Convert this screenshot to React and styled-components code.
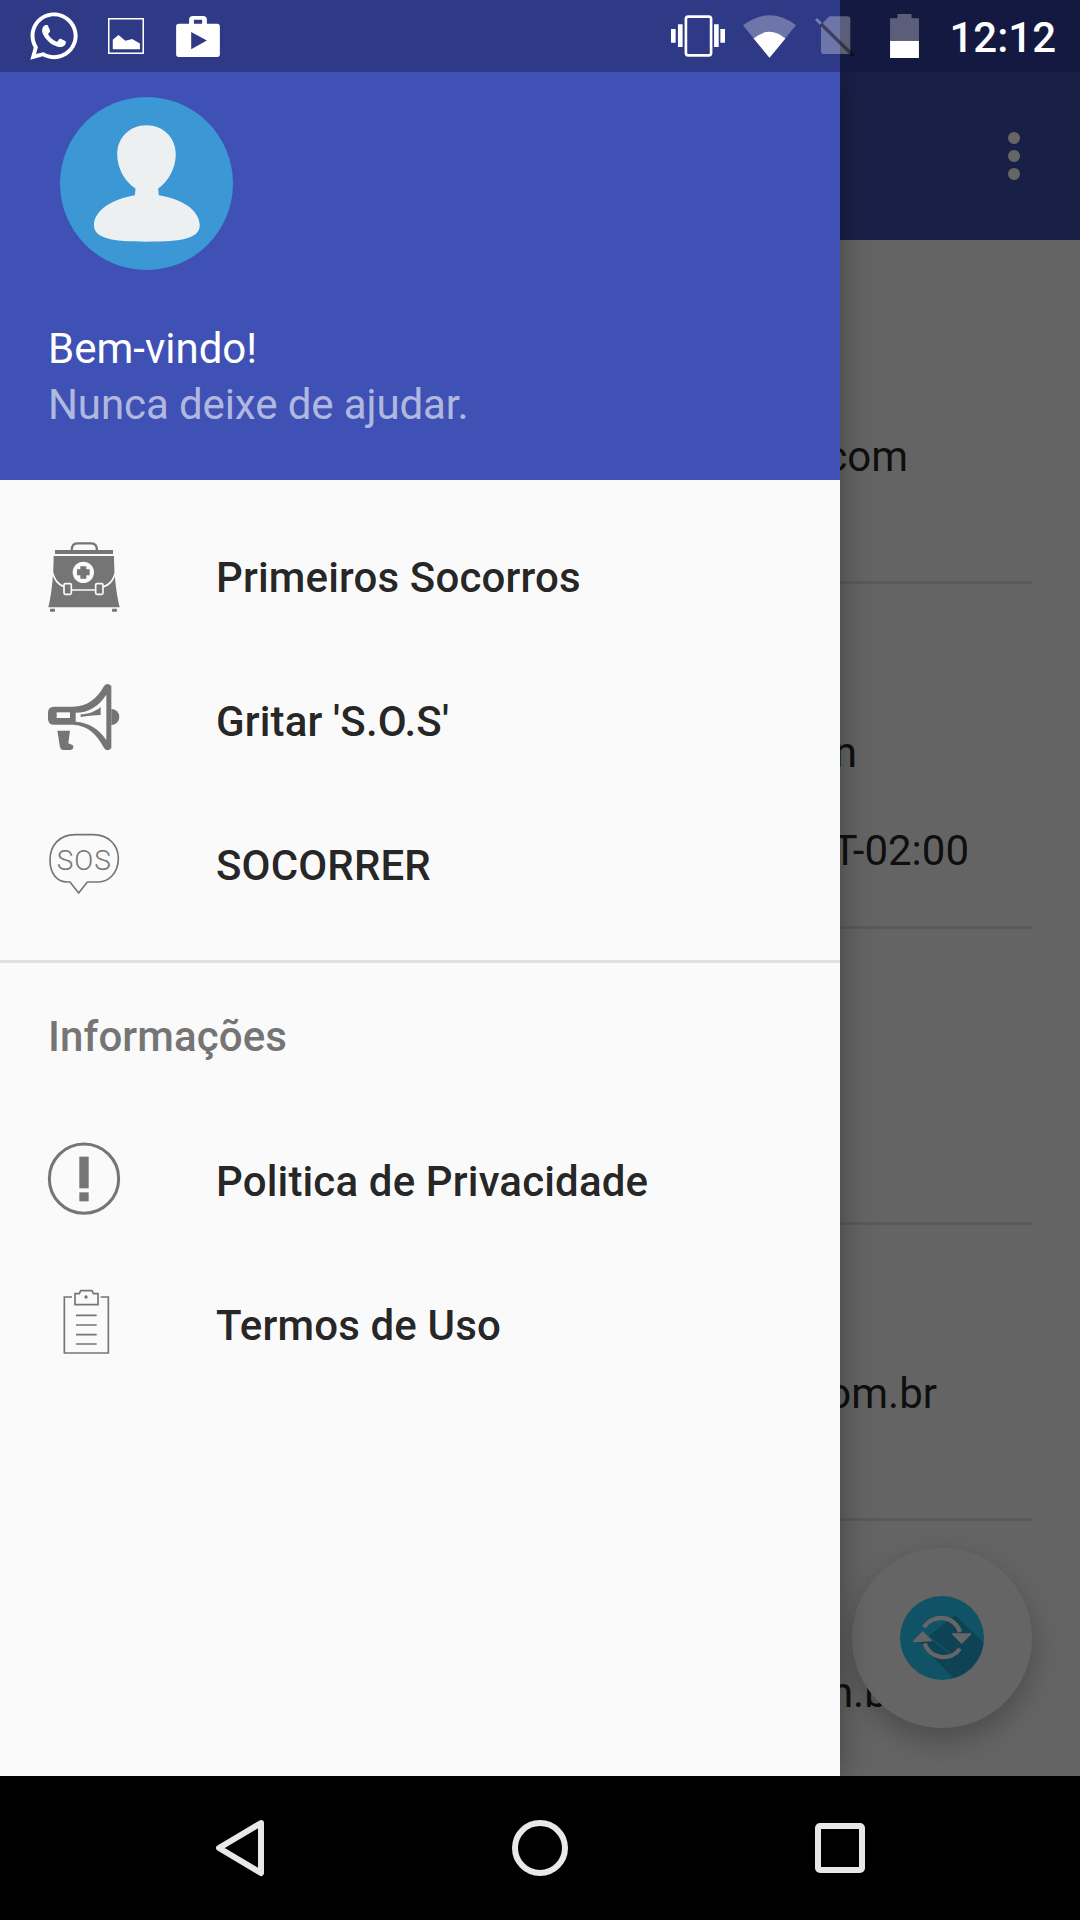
import styled, { createGlobalStyle } from "styled-components";
import { FaWhatsapp } from "react-icons/fa";

const GlobalStyle = createGlobalStyle`
  html, body {
    margin: 0;
    padding: 0;
    background: #000;
  }
  * {
    box-sizing: border-box;
  }
`;

const Page = styled.div`
  width: 1080px;
  height: 1920px;
  display: flex;
  flex-direction: column;
  overflow: hidden;
  font-family: Roboto, "Noto Sans", sans-serif;
`;

const StatusBar = styled.div`
  height: 72px;
  flex-shrink: 0;
  display: flex;
  align-items: center;
  justify-content: space-between;
  padding: 0 24px 0 27px;
  color: #fff;
  background: linear-gradient(90deg, #2e3a85 840px, #131940 840px);
`;

const StatusGroup = styled.div`
  display: flex;
  align-items: center;
`;

const StatusIcon = styled.svg`
  display: block;
  flex-shrink: 0;
  margin-left: ${(p) => p.$ml || 0}px;
`;

const WhatsApp = styled(FaWhatsapp)`
  display: block;
  width: 54px;
  height: 54px;
  color: #fff;
`;

const Clock = styled.span`
  margin-left: 30px;
  padding-top: 4px;
  font-size: 42px;
  font-weight: 500;
  line-height: 68px;
  color: #fff;
`;

const Main = styled.div`
  position: relative;
  flex: 1;
  min-height: 0;
  overflow: hidden;
  background: #fafafa;
`;

const AppBar = styled.div`
  height: 168px;
  display: flex;
  align-items: center;
  justify-content: flex-end;
  padding-right: 60px;
  background: #3f51b5;
`;

const Dots = styled.div`
  display: flex;
  flex-direction: column;
  gap: 6px;
`;

const Dot = styled.span`
  width: 12px;
  height: 12px;
  border-radius: 50%;
  background: #fff;
`;

const Row = styled.div`
  height: ${(p) => p.$h}px;
  margin: 0 48px;
  display: flex;
  flex-direction: column;
  justify-content: flex-end;
  align-items: flex-end;
  gap: 42px;
  padding-bottom: ${(p) => p.$pb || 0}px;
  border-bottom: 3px solid #e0e0e0;
`;

const RowText = styled.span`
  font-size: 42px;
  line-height: 56px;
  color: rgba(0, 0, 0, 0.87);
  padding-right: ${(p) => p.$pr}px;
`;

const Fab = styled.div`
  position: absolute;
  left: 852px;
  top: 1476px;
  width: 180px;
  height: 180px;
  border-radius: 50%;
  display: flex;
  align-items: center;
  justify-content: center;
  background: #fdfdfd;
  box-shadow: 0 12px 30px rgba(0, 0, 0, 0.25);
`;

const Scrim = styled.div`
  position: absolute;
  inset: 0;
  background: rgba(0, 0, 0, 0.6);
`;

const Drawer = styled.nav`
  position: absolute;
  left: 0;
  top: 0;
  bottom: 0;
  width: 840px;
  display: flex;
  flex-direction: column;
  background: #fafafa;
  box-shadow: 0 0 30px rgba(0, 0, 0, 0.35);
`;

const DrawerHeader = styled.header`
  height: 408px;
  flex-shrink: 0;
  padding: 25px 48px 0;
  background: #3f51b5;
`;

const Avatar = styled.svg`
  display: block;
  width: 173px;
  height: 173px;
  margin: 0 0 51px 12px;
`;

const Greeting = styled.div`
  font-size: 42px;
  line-height: 56px;
  letter-spacing: ${(p) => (p.$muted ? "-0.1px" : "0")};
  color: ${(p) => (p.$muted ? "rgba(255, 255, 255, 0.6)" : "#fff")};
`;

const Menu = styled.div`
  display: flex;
  flex-direction: column;
  padding-top: ${(p) => p.$pt || 0}px;
  padding-bottom: ${(p) => p.$pb || 0}px;
`;

const MenuItem = styled.div`
  height: 144px;
  display: flex;
  align-items: center;
  padding-left: 48px;
`;

const ItemIcon = styled.svg`
  display: block;
  width: 72px;
  height: 72px;
  flex-shrink: 0;
  margin-right: 96px;
  overflow: visible;
`;

const ItemLabel = styled.span`
  font-size: 42px;
  font-weight: 500;
  letter-spacing: 0.15px;
  color: rgba(0, 0, 0, 0.87);
`;

const Divider = styled.div`
  height: 3px;
  background: #e0e0e0;
`;

const SectionTitle = styled.div`
  height: 100px;
  margin: 24px 0 22px;
  padding-left: 48px;
  font-size: 42px;
  font-weight: 500;
  letter-spacing: 0.1px;
  line-height: 100px;
  color: #757575;
`;

const NavBar = styled.div`
  height: 144px;
  flex-shrink: 0;
  display: flex;
  align-items: center;
  justify-content: center;
  background: #000;
`;

const NavSlot = styled.div`
  width: 300px;
  display: flex;
  justify-content: center;
`;

function BagIcon() {
  return (
    <ItemIcon viewBox="54 63 216 216">
      <path d="M125 92c0-14 6-22 16-22h44c10 0 16 8 16 22" fill="none" stroke="#757575" strokeWidth="7" />
      <rect x="75" y="90" width="174" height="12" fill="#757575" />
      <path d="M71 108h181c0 50 6 110 17 154H55c11-44 16-104 16-154z" fill="#757575" />
      <path d="M62 128c4 40 18 66 42 72M262 128c-4 40-18 66-42 72M120 210h80" fill="none" stroke="#fafafa" strokeWidth="5" />
      <rect x="102" y="191" width="22" height="32" rx="4" fill="#757575" stroke="#fafafa" strokeWidth="5" />
      <rect x="197" y="191" width="22" height="32" rx="4" fill="#757575" stroke="#fafafa" strokeWidth="5" />
      <circle cx="160" cy="157" r="32" fill="#fafafa" />
      <path d="M151 139h18v9h10v18h-10v10h-18v-10h-10v-18h10z" fill="#757575" />
      <rect x="60" y="266" width="15" height="9" rx="2" fill="#757575" />
      <rect x="246" y="266" width="15" height="9" rx="2" fill="#757575" />
    </ItemIcon>
  );
}

function MegaphoneIcon() {
  return (
    <ItemIcon viewBox="54 60 216 216">
      <path d="M244 132a24 24 0 0 1 0 48z" fill="#757575" />
      <path d="M72 125h56c44 0 74-24 94-62q10-12 22 0v186q-12 14-22 0c-22-42-46-66-92-70H72q-18 0-18-18v-18q0-18 18-18z" fill="#757575" />
      <path d="M80 142h40v17H80z" fill="#fafafa" />
      <path d="M137 143c38 0 68-18 92-54v136c-24-34-52-52-92-55z" fill="#fafafa" />
      <path d="M152 148c22 0 44-8 60-22v24c-22 0-42 3-60 6z" fill="#757575" />
      <path d="M82 197h38l-5 38 14 6q4 12-8 14H98q-6 0-8-8z" fill="#757575" />
    </ItemIcon>
  );
}

function SosIcon() {
  return (
    <ItemIcon viewBox="54 492 216 216">
      <path d="M120 651h-8c-32 0-52-26-52-66 0-45 30-76 75-76h55c45 0 75 31 75 71 0 45-30 71-60 71h-33l-26 33z" fill="none" stroke="#757575" strokeWidth="5" />
      <text x="163" y="615" textAnchor="middle" fontFamily="Roboto, sans-serif" fontSize="84" letterSpacing="3" fill="#757575" fontWeight="300">SOS</text>
    </ItemIcon>
  );
}

function AlertIcon() {
  return (
    <ItemIcon viewBox="54 45 216 216">
      <circle cx="162" cy="146" r="104" fill="none" stroke="#757575" strokeWidth="9" />
      <rect x="148" y="80" width="28" height="95" fill="#757575" />
      <rect x="148" y="187" width="28" height="27" fill="#757575" />
    </ItemIcon>
  );
}

function ClipboardIcon() {
  return (
    <ItemIcon viewBox="54 477 216 216">
      <path d="M126 501h-23v168h132V501h-23" fill="none" stroke="#757575" strokeWidth="5" />
      <path d="M135 491h13l4-9h34l4 9h14v33h-69z" fill="none" stroke="#757575" strokeWidth="5" />
      <circle cx="168" cy="501" r="5" fill="#757575" />
      <path d="M138 556h62M138 585h62M138 614h62M138 642h62" stroke="#757575" strokeWidth="5" />
    </ItemIcon>
  );
}

function SyncIcon() {
  return (
    <svg width="84" height="84" viewBox="360 288 252 252">
      <defs>
        <clipPath id="fabClip">
          <circle cx="486" cy="414" r="126" />
        </clipPath>
      </defs>
      <circle cx="486" cy="414" r="126" fill="#29ccff" />
      <g clipPath="url(#fabClip)">
        <path d="M525 345L650 465V560H545L420 430z" fill="#25a7d4" />
        <path d="M432 400l76 58" stroke="#29ccff" strokeWidth="5" />
      </g>
      <path d="M432 382a60 60 0 0 1 108 14M540 446a60 60 0 0 1-106-16" fill="none" stroke="#fff" strokeWidth="13" />
      <path d="M518 402h54l-27 27zM400 425l28-29 26 26z" fill="#fff" stroke="#fff" strokeWidth="4" strokeLinejoin="round" />
    </svg>
  );
}

export default function App() {
  return (
    <Page>
      <GlobalStyle />
      <StatusBar>
        <StatusGroup>
          <WhatsApp />
          <StatusIcon $ml={27} width="36" height="36" viewBox="324 55 106 106">
            <rect x="326" y="57" width="102" height="102" fill="none" stroke="#fff" strokeWidth="5" />
            <path d="M338 119l17-14 20 17 20-5 23 13v17h-80z" fill="#fff" />
          </StatusIcon>
          <StatusIcon $ml={32} width="44" height="41" viewBox="530 45 128 120">
            <path d="M538 68h30v-12q0-11 11-11h30q11 0 11 11v12h30q8 0 8 8v81q0 8-8 8H538q-8 0-8-8V76q0-8 8-8zM582 56v12h24V56z" fill="#fff" fillRule="evenodd" />
            <path d="M574 92l46 25-46 25z" fill="#2e3a85" />
          </StatusIcon>
        </StatusGroup>
        <StatusGroup>
          <StatusIcon width="54" height="42" viewBox="92 46 163 125">
            <rect x="137" y="50" width="76" height="117" rx="7" fill="none" stroke="#fff" strokeWidth="8" />
            <path d="M113 73h14v69h-14zM92 87h14v42H92zM222 73h14v69h-14zM241 87h14v42h-14z" fill="#fff" />
          </StatusIcon>
          <StatusIcon $ml={18} width="53" height="43" viewBox="308 42 160 128">
            <path d="M308 72q80-60 160 0l-80 98z" fill="#fff" fillOpacity="0.3" />
            <path d="M340 112q48-40 96 0l-48 58z" fill="#fff" />
          </StatusIcon>
          <StatusIcon $ml={19} width="40" height="42" viewBox="522 46 120 126">
            <path d="M565 50h53q10 0 10 10v103h-78q-10 0-10-10V75z" fill="#fff" fillOpacity="0.3" />
            <path d="M525 58l15 15" stroke="#fff" strokeOpacity="0.35" strokeWidth="9" />
            <path d="M540 73l98 96" stroke="#000" strokeOpacity="0.45" strokeWidth="10" />
          </StatusIcon>
          <StatusIcon $ml={35} width="29" height="44" viewBox="750 42 86 131">
            <path d="M772 42h42v13h22v67h-86V55h22z" fill="#fff" fillOpacity="0.3" />
            <rect x="750" y="122" width="86" height="51" fill="#fff" />
          </StatusIcon>
          <Clock>12:12</Clock>
        </StatusGroup>
      </StatusBar>

      <Main>
        <AppBar>
          <Dots>
            <Dot />
            <Dot />
            <Dot />
          </Dots>
        </AppBar>
        <Row $h={344} $pb={96}>
          <RowText $pr={124}>com</RowText>
        </Row>
        <Row $h={345} $pb={47}>
          <RowText $pr={175}>n</RowText>
          <RowText $pr={63}>T-02:00</RowText>
        </Row>
        <Row $h={296} />
        <Row $h={296} $pb={96}>
          <RowText $pr={95}>om.br</RowText>
        </Row>
        <Row $h={259} $pb={56}>
          <RowText $pr={130}>n.br</RowText>
        </Row>
        <Fab>
          <SyncIcon />
        </Fab>
        <Scrim />
        <Drawer>
          <DrawerHeader>
            <Avatar viewBox="180 290 520 520">
              <circle cx="440" cy="550" r="260" fill="#3c97d5" />
              <path d="M440 375c50 0 88 37 88 87 0 43-23 83-53 103l2 20c68 10 123 45 123 90 0 40-50 50-160 50-105 0-158-10-158-50 0-45 58-80 123-90l2-20c-32-20-55-60-55-103 0-50 38-87 88-87z" fill="#ecf0f1" />
            </Avatar>
            <Greeting>Bem-vindo!</Greeting>
            <Greeting $muted>Nunca deixe de ajudar.</Greeting>
          </DrawerHeader>
          <Menu $pt={25} $pb={23}>
            <MenuItem>
              <BagIcon />
              <ItemLabel>Primeiros Socorros</ItemLabel>
            </MenuItem>
            <MenuItem>
              <MegaphoneIcon />
              <ItemLabel>Gritar 'S.O.S'</ItemLabel>
            </MenuItem>
            <MenuItem>
              <SosIcon />
              <ItemLabel>SOCORRER</ItemLabel>
            </MenuItem>
          </Menu>
          <Divider />
          <SectionTitle>Informações</SectionTitle>
          <Menu>
            <MenuItem>
              <AlertIcon />
              <ItemLabel>Politica de Privacidade</ItemLabel>
            </MenuItem>
            <MenuItem>
              <ClipboardIcon />
              <ItemLabel>Termos de Uso</ItemLabel>
            </MenuItem>
          </Menu>
        </Drawer>
      </Main>

      <NavBar>
        <NavSlot>
          <svg width="50" height="58" viewBox="0 0 50 58">
            <path d="M46 4L4 29l42 25z" fill="none" stroke="#e8e8e8" strokeWidth="6" strokeLinejoin="round" />
          </svg>
        </NavSlot>
        <NavSlot>
          <svg width="56" height="56" viewBox="0 0 56 56">
            <circle cx="28" cy="28" r="25" fill="none" stroke="#e8e8e8" strokeWidth="6" />
          </svg>
        </NavSlot>
        <NavSlot>
          <svg width="50" height="50" viewBox="0 0 50 50">
            <rect x="3" y="3" width="44" height="44" rx="2" fill="none" stroke="#e8e8e8" strokeWidth="6" />
          </svg>
        </NavSlot>
      </NavBar>
    </Page>
  );
}
